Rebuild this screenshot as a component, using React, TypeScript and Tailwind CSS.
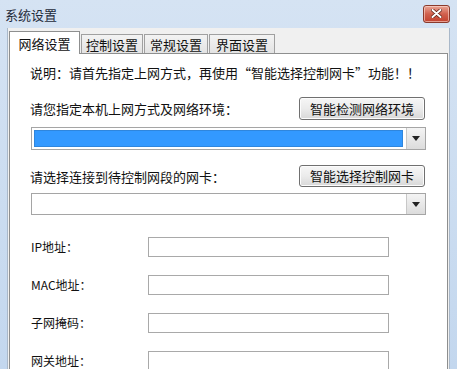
import React from "react";

const font = { fontFamily: '"Noto Sans CJK SC", "Liberation Sans", sans-serif' };

function Arrow() {
  return (
    <div className="w-[19px] h-full flex items-center justify-center bg-gradient-to-b from-[#f4f4f4] to-[#dcdcdc] border-l border-[#c8c8c8]">
      <svg width="8" height="5" viewBox="0 0 8 5">
        <path d="M0 0 H8 L4 5 Z" fill="#222" />
      </svg>
    </div>
  );
}

function Btn({ children }: { children: React.ReactNode }) {
  return (
    <div className="w-[126px] flex items-center justify-center rounded-[3px] border border-[#707070] bg-gradient-to-b from-[#f6f6f6] via-[#ebebeb] to-[#d8d8d8] text-[13px] text-[#111] shadow-[inset_0_0_0_1px_#fcfcfc]">
      {children}
    </div>
  );
}

function Field({ label, first }: { label: string; first?: boolean }) {
  return (
    <div className={`flex items-center h-[20px] ${first ? "mt-[22px]" : "mt-[18px]"}`}>
      <div className="w-[118px] text-[12px] text-[#111] pl-[1px] leading-none">{label}</div>
      <div className="w-[241px] h-[20px] border border-[#a9a9a9] bg-white" />
    </div>
  );
}

export default function App() {
  return (
    <div className="w-[457px] h-[369px] overflow-hidden bg-gradient-to-b from-[#d5e3f3] to-[#c3d7ee]" style={font}>
      <div className="h-[28px] flex items-center justify-between pl-[5px] pr-[7px]">
        <span className="text-[13px] text-[#1e2a3a] leading-none">系统设置</span>
        <div className="w-[27px] h-[18px] mt-[-1px] rounded-[3px] border border-[#8a3a2c] bg-gradient-to-b from-[#e9a596] via-[#d0604d] to-[#c2412e] flex items-center justify-center shadow-[inset_0_0_0_1px_rgba(255,220,210,0.6)]">
          <svg width="11" height="9" viewBox="0 0 11 9">
            <path d="M1.5 1 L9.5 8 M9.5 1 L1.5 8" stroke="#5a1d12" strokeWidth="3.4" strokeLinecap="round" />
            <path d="M1.5 1 L9.5 8 M9.5 1 L1.5 8" stroke="#ffffff" strokeWidth="2" strokeLinecap="round" />
          </svg>
        </div>
      </div>
      <div className="ml-[7px] w-[443px] h-[341px] bg-[#f0f0f0] border-l border-r border-[#a9b8c9] pt-[3px] pl-[1px]">
        <div className="flex items-end h-[22px] text-[13px] text-[#111]">
          <div className="relative z-10 w-[71px] h-[23px] -mb-px bg-white border border-b-0 border-[#8e8f8f] flex items-center justify-center leading-none">网络设置</div>
          <div className="w-[62px] h-[19px] ml-[1px] border border-b-0 border-[#a0a0a0] bg-gradient-to-b from-[#f3f3f3] to-[#e3e3e3] flex items-center justify-center leading-none">控制设置</div>
          <div className="w-[64px] h-[19px] ml-[1px] border border-b-0 border-[#a0a0a0] bg-gradient-to-b from-[#f3f3f3] to-[#e3e3e3] flex items-center justify-center leading-none">常规设置</div>
          <div className="w-[66px] h-[19px] ml-[1px] border border-b-0 border-[#a0a0a0] bg-gradient-to-b from-[#f3f3f3] to-[#e3e3e3] flex items-center justify-center leading-none">界面设置</div>
        </div>
        <div className="w-[439px] h-[330px] bg-white border border-[#8e8f8f] pt-[10px] pl-[20px] pr-[22px] text-[13px] text-[#111]">
          <div className="leading-[18px] whitespace-nowrap">说明：请首先指定上网方式，再使用“智能选择控制网卡”功能！！</div>
          <div className="mt-[15px] h-[23px] flex justify-between">
            <span className="self-center leading-none">请您指定本机上网方式及网络环境：</span>
            <Btn>智能检测网络环境</Btn>
          </div>
          <div className="mt-[7px] ml-[1px] w-[395px] h-[23px] border border-[#a5a5a5] flex">
            <div className="flex-1 p-[2px] pr-[3px]">
              <div className="w-full h-full bg-[#3399ff] border border-[#2f86dd]" />
            </div>
            <Arrow />
          </div>
          <div className="mt-[15px] h-[22px] flex justify-between">
            <span className="self-center leading-none">请选择连接到待控制网段的网卡：</span>
            <Btn>智能选择控制网卡</Btn>
          </div>
          <div className="mt-[6px] ml-[1px] w-[395px] h-[22px] border border-[#a5a5a5] flex">
            <div className="flex-1" />
            <Arrow />
          </div>
          <Field label="IP地址：" first />
          <Field label="MAC地址：" />
          <Field label="子网掩码：" />
          <Field label="网关地址：" />
        </div>
      </div>
    </div>
  );
}
